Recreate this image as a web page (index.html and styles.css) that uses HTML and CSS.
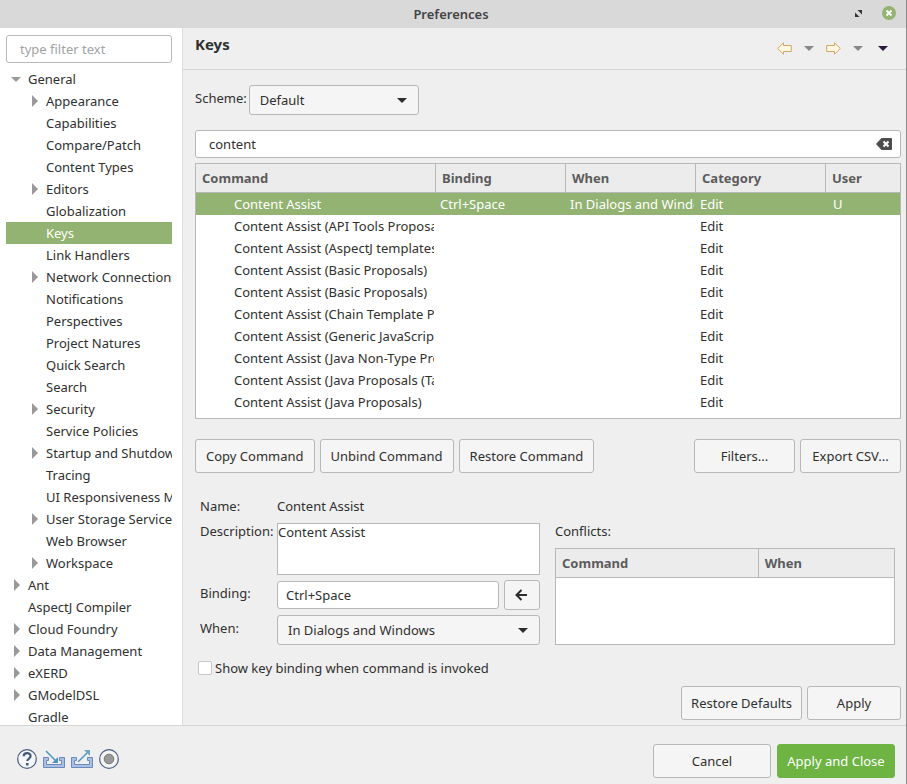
FILE: index.html
```
<!DOCTYPE html>
<html lang="en">
    <head>
        <meta charset="UTF-8">
        <title>Preferences</title>

        <link rel="stylesheet" href="styles.css">
    </head>

    <body>
        <header class="titlebar">
            <h1>Preferences</h1>
            <div class="window_buttons">
                <button type="button" aria-label="Maximize">
                    <svg width="7" height="7" viewBox="0 0 7 7" fill="#333"><path d="M2.500 0H7v4.500L5.500 3 4 1.500z"/><path d="M0 2.500V7h4.500L3 5.500z"/></svg>
                </button>
                <button type="button" aria-label="Close">
                    <svg width="14" height="14" viewBox="0 0 14 14"><circle cx="7" cy="7" r="7" fill="#92b372"/><path d="M4.500 4.500l5 5M9.500 4.500l-5 5" stroke="#fff" stroke-width="2"/></svg>
                </button>
            </div>
        </header>

        <div class="main">
            <nav class="sidebar">
                <input type="text" class="field filter" placeholder="type filter text" aria-label="Filter">
                <ul class="tree">
                    <li><a href="#" class="open">General</a>
                        <ul>
                            <li><a href="#" class="closed">Appearance</a></li>
                            <li><a href="#">Capabilities</a></li>
                            <li><a href="#">Compare/Patch</a></li>
                            <li><a href="#">Content Types</a></li>
                            <li><a href="#" class="closed">Editors</a></li>
                            <li><a href="#">Globalization</a></li>
                            <li><a href="#" class="active">Keys</a></li>
                            <li><a href="#">Link Handlers</a></li>
                            <li><a href="#" class="closed">Network Connections</a></li>
                            <li><a href="#">Notifications</a></li>
                            <li><a href="#">Perspectives</a></li>
                            <li><a href="#">Project Natures</a></li>
                            <li><a href="#">Quick Search</a></li>
                            <li><a href="#">Search</a></li>
                            <li><a href="#" class="closed">Security</a></li>
                            <li><a href="#">Service Policies</a></li>
                            <li><a href="#" class="closed">Startup and Shutdown</a></li>
                            <li><a href="#">Tracing</a></li>
                            <li><a href="#">UI Responsiveness Monitoring</a></li>
                            <li><a href="#" class="closed">User Storage Service</a></li>
                            <li><a href="#">Web Browser</a></li>
                            <li><a href="#" class="closed">Workspace</a></li>
                        </ul>
                    </li>
                    <li><a href="#" class="closed">Ant</a></li>
                    <li><a href="#">AspectJ Compiler</a></li>
                    <li><a href="#" class="closed">Cloud Foundry</a></li>
                    <li><a href="#" class="closed">Data Management</a></li>
                    <li><a href="#" class="closed">eXERD</a></li>
                    <li><a href="#" class="closed">GModelDSL</a></li>
                    <li><a href="#">Gradle</a></li>
                </ul>
            </nav>

            <main class="page">
                <div class="page_header">
                    <h2>Keys</h2>
                    <div class="history">
                        <button type="button" aria-label="Back">
                            <svg width="15" height="13" viewBox="0 0 15 13"><path d="M.7 6.500L6.500.8v2.700h7.800v6H6.500v2.700z" fill="#fff8e0" stroke="#d3a765" stroke-linejoin="round"/></svg>
                        </button>
                        <button type="button" aria-label="Back history">
                            <svg width="10" height="5" viewBox="0 0 10 5"><path d="M0 0h10L5 5z" fill="#888"/></svg>
                        </button>
                        <button type="button" aria-label="Forward">
                            <svg width="15" height="13" viewBox="0 0 15 13"><path d="M14.300 6.500L8.500.8v2.700H.7v6h7.800v2.700z" fill="#fff8e0" stroke="#d3a765" stroke-linejoin="round"/></svg>
                        </button>
                        <button type="button" aria-label="Forward history">
                            <svg width="10" height="5" viewBox="0 0 10 5"><path d="M0 0h10L5 5z" fill="#888"/></svg>
                        </button>
                        <button type="button" class="menu" aria-label="Menu">
                            <svg width="10" height="5" viewBox="0 0 10 5"><path d="M0 0h10L5 5z" fill="#2a1a3e"/></svg>
                        </button>
                    </div>
                </div>

                <div class="page_body">
                    <div class="scheme">
                        <label for="scheme">Scheme:</label>
                        <div class="select">
                            <select id="scheme"><option>Default</option></select>
                        </div>
                    </div>

                    <div class="search">
                        <input type="text" class="field" value="content" aria-label="Search commands">
                        <button type="button" aria-label="Clear">
                            <svg width="16" height="12" viewBox="0 0 16 12"><path d="M5.500 0H15a1 1 0 0 1 1 1v10a1 1 0 0 1-1 1H5.500L0 6z" fill="#4d4d4d"/><path d="M7.500 3.500l5 5M12.500 3.500l-5 5" stroke="#fff" stroke-width="2"/></svg>
                        </button>
                    </div>

                    <div class="table_box commands">
                        <table>
                            <colgroup><col class="wide"><col class="mid"><col class="mid"><col class="mid"><col></colgroup>
                            <thead>
                                <tr><th>Command</th><th>Binding</th><th>When</th><th>Category</th><th>User</th></tr>
                            </thead>
                            <tbody>
                                <tr class="active"><td>Content Assist</td><td>Ctrl+Space</td><td>In Dialogs and Windows</td><td>Edit</td><td>U</td></tr>
                                <tr><td>Content Assist (API Tools Proposals)</td><td></td><td></td><td>Edit</td><td></td></tr>
                                <tr><td>Content Assist (AspectJ templates)</td><td></td><td></td><td>Edit</td><td></td></tr>
                                <tr><td>Content Assist (Basic Proposals)</td><td></td><td></td><td>Edit</td><td></td></tr>
                                <tr><td>Content Assist (Basic Proposals)</td><td></td><td></td><td>Edit</td><td></td></tr>
                                <tr><td>Content Assist (Chain Template Proposals)</td><td></td><td></td><td>Edit</td><td></td></tr>
                                <tr><td>Content Assist (Generic JavaScript)</td><td></td><td></td><td>Edit</td><td></td></tr>
                                <tr><td>Content Assist (Java Non-Type Proposals)</td><td></td><td></td><td>Edit</td><td></td></tr>
                                <tr><td>Content Assist (Java Proposals (Task-Focused))</td><td></td><td></td><td>Edit</td><td></td></tr>
                                <tr><td>Content Assist (Java Proposals)</td><td></td><td></td><td>Edit</td><td></td></tr>
                            </tbody>
                        </table>
                    </div>

                    <div class="buttons">
                        <button type="button" class="btn">Copy Command</button>
                        <button type="button" class="btn">Unbind Command</button>
                        <button type="button" class="btn">Restore Command</button>
                        <button type="button" class="btn medium push">Filters...</button>
                        <button type="button" class="btn medium">Export CSV...</button>
                    </div>

                    <div class="details">
                        <div class="form">
                            <span class="name">Name:</span>
                            <span class="name">Content Assist</span>
                            <label for="description" class="top">Description:</label>
                            <textarea id="description">Content Assist</textarea>
                            <label for="binding">Binding:</label>
                            <div class="binding">
                                <input type="text" class="field" id="binding" value="Ctrl+Space">
                                <button type="button" class="btn" aria-label="Add special key">
                                    <svg width="12" height="12" viewBox="0 0 12 12" fill="none" stroke="#2d2d2d" stroke-width="2"><path d="M6.500 1L1.500 6l5 5M1.500 6H12"/></svg>
                                </button>
                            </div>
                            <label for="when">When:</label>
                            <div class="select">
                                <select id="when"><option>In Dialogs and Windows</option></select>
                            </div>
                        </div>
                        <div class="conflicts">
                            <span>Conflicts:</span>
                            <div class="table_box">
                                <table>
                                    <colgroup><col class="command"><col></colgroup>
                                    <thead>
                                        <tr><th>Command</th><th>When</th></tr>
                                    </thead>
                                </table>
                            </div>
                        </div>
                    </div>

                    <div class="check">
                        <input type="checkbox" id="show">
                        <label for="show">Show key binding when command is invoked</label>
                    </div>

                    <div class="buttons apply">
                        <button type="button" class="btn defaults push">Restore Defaults</button>
                        <button type="button" class="btn small">Apply</button>
                    </div>
                </div>
            </main>
        </div>

        <footer class="footer">
            <div class="tools">
                <button type="button" aria-label="Help">
                    <svg width="20" height="20" viewBox="0 0 20 20" fill="none"><circle cx="10" cy="10" r="9.300" fill="#f4f6f9" stroke="#4a5f84" stroke-width="1.200"/><path d="M6.700 7.300c0-4.300 6.900-4.100 6.900-.4 0 2.600-3.300 2.600-3.300 5.100" stroke="#43587c" stroke-width="2.200"/><path d="M9 14h2.500v2.500H9z" fill="#43587c"/></svg>
                </button>
                <button type="button" aria-label="Import">
                    <svg width="22" height="20" viewBox="0 0 22 20" fill="none"><path d="M.5 8.500h5v3h-2v4h15v-4h-2v-3h5v10H.5z" fill="#a9c0e2" stroke="#6c89bd"/><path d="M3 2l10 10" stroke="#4d96bd" stroke-width="1.500"/><path d="M15 8v6H9z" fill="#4d96bd"/></svg>
                </button>
                <button type="button" aria-label="Export">
                    <svg width="22" height="20" viewBox="0 0 22 20" fill="none"><path d="M.5 8.500h5v3h-2v4h15v-4h-2v-3h5v10H.5z" fill="#a9c0e2" stroke="#6c89bd"/><path d="M7 13L17 3" stroke="#4d96bd" stroke-width="1.500"/><path d="M13 1h6v6z" fill="#6fa5c5"/></svg>
                </button>
                <button type="button" aria-label="Record">
                    <svg width="20" height="20" viewBox="0 0 20 20"><circle cx="10" cy="10" r="9.300" fill="#f4f4f4" stroke="#4a5f84" stroke-width="1.200"/><circle cx="10" cy="10" r="4.800" fill="#999" stroke="#777"/></svg>
                </button>
            </div>
            <button type="button" class="btn large">Cancel</button>
            <button type="button" class="btn large primary">Apply and Close</button>
        </footer>
    </body>
</html>
```
FILE: styles.css
```
* {
    box-sizing: border-box;
}
body {
    display: flex;
    flex-direction: column;
    height: 100vh;
    margin: 0;
    border-right: 1px solid #8a8a8a;
    font-family: "Noto Sans", "Open Sans", sans-serif;
    font-size: 13px;
    line-height: 18px;
    color: #303030;
    background: #efefef;
}
h1, h2, ul {
    margin: 0;
    padding: 0;
}
ul {
    list-style: none;
}
button, input, select, textarea {
    margin: 0;
    font: inherit;
    color: inherit;
}
button {
    padding: 0;
    border: 0;
    background: none;
}
svg {
    display: block;
}

.titlebar {
    position: relative;
    flex: none;
    height: 28px;
    padding-right: 4px;
    background: #d9d9d9;
}
.titlebar h1 {
    font-size: 13px;
    font-weight: 600;
    line-height: 28px;
    text-align: center;
    color: #444;
}
.window_buttons {
    position: absolute;
    top: 6px;
    right: 10px;
    display: flex;
    align-items: center;
    gap: 20px;
}

.main {
    display: flex;
    flex: 1;
    min-height: 0;
}
.sidebar {
    flex: none;
    width: 183px;
    padding: 7px 10px 0 6px;
    border-right: 1px solid #dcdcdc;
    background: #fff;
    overflow: hidden;
}
.field {
    display: block;
    width: 100%;
    height: 28px;
    padding: 0 8px;
    border: 1px solid #b8b8b8;
    border-radius: 3px;
    background: #fff;
}
.filter {
    padding: 0 13px;
}
.filter::placeholder {
    color: #a3a3a3;
}
.tree {
    margin-top: 5px;
}
.tree a {
    position: relative;
    display: block;
    height: 22px;
    padding-left: 22px;
    line-height: 22px;
    white-space: nowrap;
    text-decoration: none;
    color: inherit;
    overflow: hidden;
}
.tree ul a {
    padding-left: 40px;
}
.tree a.active {
    color: #fff;
    background: #92b372;
}
.tree .open::before, .tree .closed::before {
    content: "";
    position: absolute;
    border: 5px solid transparent;
}
.tree .open::before {
    top: 9px;
    left: 5px;
    border-top-color: #999;
}
.tree .closed::before {
    top: 5px;
    left: 8px;
    border-width: 6px;
    border-left-color: #999;
}
.tree ul .closed::before {
    left: 26px;
}

.page {
    display: flex;
    flex: 1;
    flex-direction: column;
    min-width: 0;
}
.page_header {
    display: flex;
    justify-content: space-between;
    height: 42px;
    padding: 0 18px 0 12px;
    border-bottom: 1px solid #d6d6d6;
}
.page_header h2 {
    margin-top: 7px;
    font-size: 15px;
    line-height: 18px;
}
.history {
    display: flex;
    align-items: center;
    gap: 12px;
}
.history .menu {
    margin-left: 3px;
}
.page_body {
    display: flex;
    flex: 1;
    flex-direction: column;
    padding: 15px 5px 5px 12px;
}
.scheme {
    display: flex;
    align-items: center;
    gap: 2px;
}
.scheme label, .form label {
    padding-bottom: 4px;
}
.select {
    position: relative;
}
.scheme .select {
    width: 170px;
}
.select select {
    display: block;
    width: 100%;
    height: 30px;
    padding: 0 30px 0 10px;
    border: 1px solid #b8b8b8;
    border-radius: 3px;
    background: #f5f5f5;
    appearance: none;
}
.select::after {
    content: "";
    position: absolute;
    top: 13px;
    right: 12px;
    border: 5px solid transparent;
    border-top-color: #2d2d2d;
    pointer-events: none;
}
.search {
    position: relative;
    margin-top: 15px;
}
.search .field {
    padding: 0 32px 0 13px;
}
.search button {
    position: absolute;
    top: 8px;
    right: 9px;
}

.table_box {
    border: 1px solid #b8b8b8;
    background: #fff;
    overflow: hidden;
}
.commands {
    flex: 1;
    margin-top: 5px;
}
table {
    width: 100%;
    table-layout: fixed;
    border-spacing: 0;
}
.wide {
    width: 240px;
}
.mid {
    width: 130px;
}
.command {
    width: 60%;
}
th {
    height: 29px;
    padding: 0 6px;
    border-right: 1px solid #b8b8b8;
    border-bottom: 1px solid #b8b8b8;
    text-align: left;
    color: #5c5c5c;
    background: #ececec;
}
th:last-child {
    border-right: 0;
}
td {
    height: 22px;
    padding: 0 0 0 4px;
    border-right: 2px solid transparent;
    white-space: nowrap;
    overflow: hidden;
}
td:first-child {
    padding-left: 38px;
}
td:last-child {
    padding-left: 7px;
}
tr.active td {
    color: #fff;
    background: #92b372;
}

.buttons {
    display: flex;
    gap: 5px;
    margin-top: 20px;
}
.btn {
    height: 34px;
    padding: 0 10px;
    border: 1px solid #b8b8b8;
    border-radius: 3px;
    white-space: nowrap;
    background: #f5f5f5;
}
.push {
    margin-left: auto;
}
.small {
    width: 94px;
}
.medium {
    width: 101px;
}
.large {
    width: 118px;
}
.defaults, .large {
    padding: 0 9px;
}
.primary {
    border-color: #6db442;
    color: #fff;
    background: #6db442;
}

.details {
    display: grid;
    grid-template-columns: 1fr 1fr;
    gap: 15px;
    margin-top: 22px;
    padding: 0 6px 0 5px;
}
.form {
    display: grid;
    grid-template-columns: 77px 1fr;
    grid-template-rows: 23px;
    gap: 5px 0;
    align-items: center;
}
.form .name {
    padding-bottom: 2px;
}
.form .top {
    align-self: start;
    line-height: 16px;
}
textarea {
    display: block;
    width: 100%;
    height: 52px;
    padding: 0;
    border: 1px solid #b8b8b8;
    line-height: 16px;
    background: #fff;
    resize: none;
}
.binding {
    display: flex;
    align-items: center;
    gap: 5px;
}
.binding .field {
    flex: 1;
    min-width: 0;
}
.binding .btn {
    width: 36px;
    height: 30px;
}
.conflicts {
    display: flex;
    flex-direction: column;
    justify-content: flex-end;
    gap: 8px;
}
.conflicts .table_box {
    height: 97px;
}
.check {
    display: flex;
    align-items: center;
    gap: 3px;
    margin-top: 14px;
    padding-left: 3px;
}
.check input {
    width: 14px;
    height: 14px;
    border: 1px solid #c8c8c8;
    border-radius: 2px;
    background: #fff;
    appearance: none;
}
.apply {
    margin-top: 9px;
}

.footer {
    display: flex;
    flex: none;
    align-items: center;
    gap: 6px;
    height: 59px;
    padding: 12px 11px 0 17px;
    border-top: 1px solid #d6d6d6;
}
.tools {
    display: flex;
    gap: 6px;
    margin-right: auto;
    padding-bottom: 4px;
}
```
